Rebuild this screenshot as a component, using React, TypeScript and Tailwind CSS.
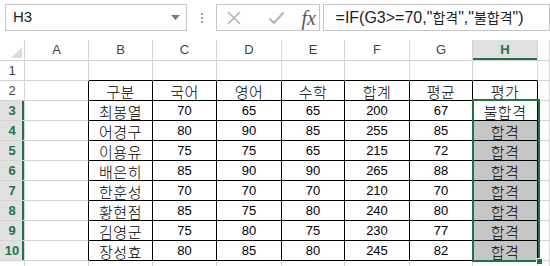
import React from "react";

const kr = "font-['Noto_Sans_CJK_KR',sans-serif]";
const lat = "font-['Liberation_Sans','Noto_Sans_CJK_KR',sans-serif]";

const header = ["구분", "국어", "영어", "수학", "합계", "평균", "평가"];

const students: (string | number)[][] = [
  ["최봉열", 70, 65, 65, 200, 67, "불합격"],
  ["어경구", 80, 90, 85, 255, 85, "합격"],
  ["이용유", 75, 75, 65, 215, 72, "합격"],
  ["배은히", 85, 90, 90, 265, 88, "합격"],
  ["한훈성", 70, 70, 70, 210, 70, "합격"],
  ["황현점", 85, 75, 80, 240, 80, "합격"],
  ["김영군", 75, 80, 75, 230, 77, "합격"],
  ["장성효", 80, 85, 80, 245, 82, "합격"],
];

const letters = ["A", "B", "C", "D", "E", "F", "G", "H", ""];

function cellValue(r: number, c: number): string | number | null {
  if (c < 1 || c > 7) return null;
  if (r === 2) return header[c - 1];
  if (r >= 3 && r <= 10) return students[r - 3][c - 1];
  return null;
}

function Cell({ r, c }: { r: number; c: number }) {
  const inTable = r >= 2 && r <= 10 && c >= 1 && c <= 7;
  const rightBlack = inTable || (c === 0 && r >= 2 && r <= 10);
  const bottomBlack = inTable || (r === 1 && c >= 1 && c <= 7);
  const shaded = c === 7 && r >= 4 && r <= 10;
  const v = cellValue(r, c);
  const isNum = typeof v === "number";
  return (
    <div
      className={`h-[20px] border-r border-b flex items-center justify-center whitespace-nowrap ${
        rightBlack ? "border-r-black" : "border-r-[#d4d4d4]"
      } ${bottomBlack ? "border-b-black" : "border-b-[#d4d4d4]"} ${shaded ? "bg-[#c6c6c6]" : "bg-white"} ${
        isNum ? `${lat} text-[13px] pt-[1px]` : `${kr} text-[15px] font-light leading-[15px] pt-[1px] tracking-[0.5px]`
      } text-black`}
    >
      {v}
    </div>
  );
}

export default function App() {
  const rows = [1, 2, 3, 4, 5, 6, 7, 8, 9, 10, 11];
  return (
    <div className="w-[550px] h-[266px] bg-white overflow-hidden relative">
      {/* formula bar */}
      <div className="h-[40px] flex items-start pt-[4px]">
        <div className={`ml-[5px] w-[192px] h-[27px] border border-[#c6c6c6] flex items-center justify-between pl-[7px] pr-[6px] ${lat} text-[15px] text-[#222]`}>
          <span>H3</span>
          <svg width="9" height="5" viewBox="0 0 9 5">
            <polygon points="0,0 9,0 4.5,5" fill="#7a7a7a" />
          </svg>
        </div>
        <div className="w-[31px] h-[27px] flex flex-col items-center justify-center gap-[2px]">
          <span className="w-[2px] h-[2px] bg-[#a0a0a0]" />
          <span className="w-[2px] h-[2px] bg-[#a0a0a0]" />
          <span className="w-[2px] h-[2px] bg-[#a0a0a0]" />
        </div>
        <div className="w-[109px] h-[27px] border border-[#c6c6c6] flex items-center">
          <svg width="16" height="16" viewBox="0 0 16 16" className="ml-[9px]">
            <path d="M2 2 L14 14 M14 2 L2 14" stroke="#b4b4b4" strokeWidth="1.6" />
          </svg>
          <svg width="17" height="14" viewBox="0 0 17 14" className="ml-[26px]">
            <path d="M1.5 7.5 L6 12 L15.5 1.5" stroke="#b4b4b4" strokeWidth="2" fill="none" />
          </svg>
          <span className="ml-[16px] font-['Liberation_Serif',serif] italic text-[20px] text-[#555] leading-none">
            fx
          </span>
        </div>
        <div className={`ml-[3px] w-[240px] h-[27px] border border-[#c6c6c6] flex items-center pl-[12px] whitespace-nowrap ${lat} text-[16px] text-[#222]`}>
          =IF(G3&gt;=70,"<span className={`${kr} text-[14px]`}>합격</span>","<span className={`${kr} text-[14px]`}>불합격</span>")
        </div>
      </div>

      {/* sheet */}
      <div className="grid grid-cols-[25px_64px_64px_64px_65px_63px_65px_63px_65px_1fr]">
        <div className="h-[21px] border-r border-b border-[#d4d4d4] bg-white flex items-end justify-end pr-[2px] pb-[2px]">
          <svg width="11" height="11" viewBox="0 0 11 11">
            <polygon points="11,0 11,11 0,11" fill="#dcdcdc" />
          </svg>
        </div>
        {letters.map((l, i) =>
          i === 7 ? (
            <div
              key={i}
              className={`h-[21px] border-r border-b border-[#d4d4d4] bg-[#e1e1e1] shadow-[inset_0_-2px_0_#217346] flex items-center justify-center ${lat} text-[13px] font-bold text-[#217346]`}
            >
              {l}
            </div>
          ) : (
            <div
              key={i}
              className={`h-[21px] border-r border-b border-[#d4d4d4] bg-white flex items-center justify-center ${lat} text-[13px] text-[#444]`}
            >
              {l}
            </div>
          )
        )}
        {rows.map((r) => (
          <React.Fragment key={r}>
            {r >= 3 && r <= 10 ? (
              <div
                className={`h-[20px] border-r border-b border-[#d4d4d4] bg-[#e1e1e1] shadow-[inset_-2px_0_0_#217346] flex items-center justify-center ${lat} text-[13px] font-bold text-[#217346]`}
              >
                {r}
              </div>
            ) : (
              <div
                className={`h-[20px] border-r border-b border-[#d4d4d4] bg-white flex items-center justify-center ${lat} text-[13px] text-[#444]`}
              >
                {r < 11 ? r : null}
              </div>
            )}
            {[0, 1, 2, 3, 4, 5, 6, 7, 8].map((c) => (
              <Cell key={c} r={r} c={c} />
            ))}
          </React.Fragment>
        ))}
      </div>

      {/* selection H3:H10 */}
      <div className="absolute left-[472px] top-[99px] w-[68px] h-[163px] border-2 border-[#217346] pointer-events-none" />
      <div className="absolute left-[536px] top-[258px] w-[7px] h-[7px] bg-[#217346] border border-white pointer-events-none" />
    </div>
  );
}
